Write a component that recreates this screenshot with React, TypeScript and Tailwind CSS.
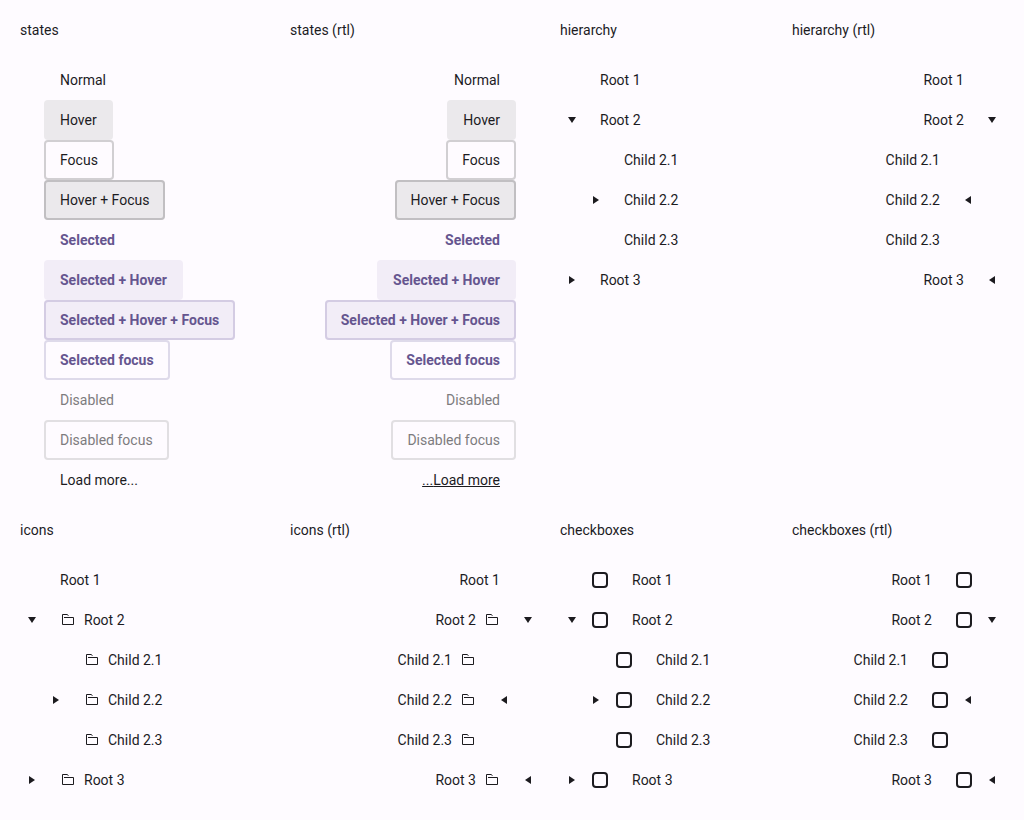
import { useId, useState } from "react";
import clsx from "clsx";

type Dir = "ltr" | "rtl";

interface Node {
  label: string;
  open?: boolean;
  icon?: boolean;
  children?: Node[];
}

const base: Node[] = [
  { label: "Root 1" },
  {
    label: "Root 2",
    open: true,
    children: [
      { label: "Child 2.1" },
      { label: "Child 2.2", children: [{ label: "Grandchild 2.2.1" }] },
      { label: "Child 2.3" },
    ],
  },
  { label: "Root 3", children: [{ label: "Child 3.1" }] },
];

const withIcons = (nodes: Node[]): Node[] =>
  nodes.map((n) => ({
    ...n,
    icon: n.label !== "Root 1",
    children: n.children && withIcons(n.children),
  }));

const iconNodes = withIcons(base);

interface State {
  label: string;
  className: string;
  selected?: boolean;
  disabled?: boolean;
}

const states: State[] = [
  { label: "Normal", className: "" },
  { label: "Hover", className: "bg-[#ebe9ec]" },
  { label: "Focus", className: "inset-ring-2 inset-ring-[#d1cfd2]" },
  { label: "Hover + Focus", className: "bg-[#ebe9ec] inset-ring-2 inset-ring-[#c1bfc2]" },
  { label: "Selected", className: "font-bold text-[#65558f]", selected: true },
  { label: "Selected + Hover", className: "bg-[#f2edf7] font-bold text-[#65558f]", selected: true },
  {
    label: "Selected + Hover + Focus",
    className: "bg-[#f2edf7] font-bold text-[#65558f] inset-ring-2 inset-ring-[#d4cce3]",
    selected: true,
  },
  {
    label: "Selected focus",
    className: "font-bold text-[#65558f] inset-ring-2 inset-ring-[#dedaea]",
    selected: true,
  },
  { label: "Disabled", className: "text-[#7d7b7e]", disabled: true },
  {
    label: "Disabled focus",
    className: "text-[#7d7b7e] inset-ring-2 inset-ring-[#e1dfe2]",
    disabled: true,
  },
];

function Arrow({ open, dir }: { open: boolean; dir: Dir }) {
  const points = open ? "4,5 12,5 8,11" : dir === "rtl" ? "11,4 5,8 11,12" : "5,4 11,8 5,12";
  return (
    <svg className="size-4 fill-current" viewBox="0 0 16 16" aria-hidden="true">
      <polygon points={points} />
    </svg>
  );
}

function Folder() {
  return (
    <svg className="size-4 shrink-0" viewBox="0 0 16 16" fill="none" stroke="currentColor" aria-hidden="true">
      <path d="M2.5 12.5V2.5H7L8.5 3.5M4 5.5H13.5V12.5H2.5" />
    </svg>
  );
}

function TreeItem({ node, dir, checkable }: { node: Node; dir: Dir; checkable?: boolean }) {
  const [open, setOpen] = useState(Boolean(node.open));
  const id = useId();
  return (
    <li role="treeitem" aria-expanded={node.children ? open : undefined}>
      <div className="flex h-10 items-center">
        {node.children ? (
          <button
            type="button"
            className="flex h-10 w-6 shrink-0 items-center justify-center"
            aria-label={open ? "Collapse" : "Expand"}
            onClick={() => setOpen(!open)}
          >
            <Arrow open={open} dir={dir} />
          </button>
        ) : (
          <span className="w-6 shrink-0" />
        )}
        {checkable && (
          <input
            id={id}
            type="checkbox"
            className="mx-2 size-4 shrink-0 appearance-none rounded-sm border-2 border-[#1c1b1f] checked:bg-[#65558f]"
          />
        )}
        {checkable ? (
          <label htmlFor={id} className="px-4 whitespace-nowrap">
            {node.label}
          </label>
        ) : (
          <span className="flex items-center gap-2 px-4 whitespace-nowrap">
            {node.icon && <Folder />}
            {node.label}
          </span>
        )}
      </div>
      {node.children && open && (
        <ul role="group" className="ps-6">
          {node.children.map((child) => (
            <TreeItem key={child.label} node={child} dir={dir} checkable={checkable} />
          ))}
        </ul>
      )}
    </li>
  );
}

function Tree({ nodes, dir, checkable }: { nodes: Node[]; dir: Dir; checkable?: boolean }) {
  return (
    <ul role="tree" dir={dir}>
      {nodes.map((node) => (
        <TreeItem key={node.label} node={node} dir={dir} checkable={checkable} />
      ))}
    </ul>
  );
}

function StateList({ dir }: { dir: Dir }) {
  return (
    <ul role="tree" dir={dir} className="flex flex-col items-start ps-6">
      {states.map((s) => (
        <li
          key={s.label}
          role="treeitem"
          aria-selected={s.selected}
          aria-disabled={s.disabled}
          className={clsx("flex h-10 items-center rounded-sm px-4 whitespace-nowrap", s.className)}
        >
          {s.label}
        </li>
      ))}
      <li role="treeitem" className="flex h-10 items-center px-4">
        <button type="button" className={clsx(dir === "rtl" && "underline")}>
          Load more...
        </button>
      </li>
    </ul>
  );
}

function Section({ title, children }: { title: string; children: React.ReactNode }) {
  return (
    <section className="flex flex-col gap-5">
      <h2>{title}</h2>
      {children}
    </section>
  );
}

export default function App() {
  return (
    <main className="grid min-h-screen grid-cols-[250fr_250fr_212fr_212fr] content-start gap-5 bg-[#fefbff] p-5 font-[Roboto,sans-serif] text-sm text-[#1c1b1f]">
      <Section title="states">
        <StateList dir="ltr" />
      </Section>
      <Section title="states (rtl)">
        <StateList dir="rtl" />
      </Section>
      <Section title="hierarchy">
        <Tree nodes={base} dir="ltr" />
      </Section>
      <Section title="hierarchy (rtl)">
        <Tree nodes={base} dir="rtl" />
      </Section>
      <Section title="icons">
        <Tree nodes={iconNodes} dir="ltr" />
      </Section>
      <Section title="icons (rtl)">
        <Tree nodes={iconNodes} dir="rtl" />
      </Section>
      <Section title="checkboxes">
        <Tree nodes={base} dir="ltr" checkable />
      </Section>
      <Section title="checkboxes (rtl)">
        <Tree nodes={base} dir="rtl" checkable />
      </Section>
    </main>
  );
}
